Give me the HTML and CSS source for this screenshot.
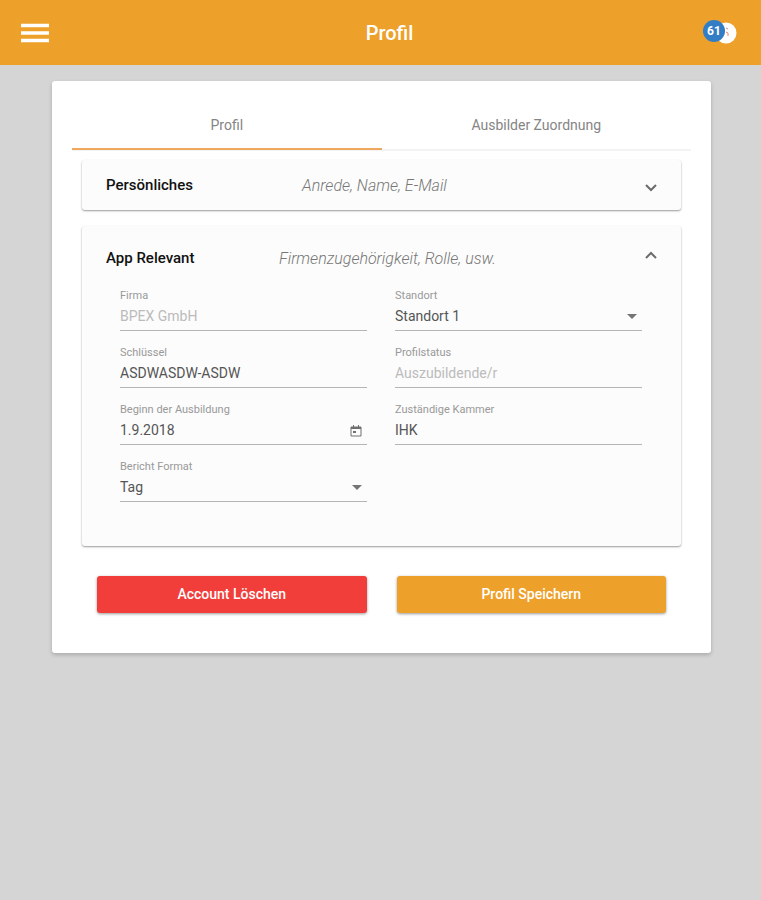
FILE: index.html
```html
<!DOCTYPE html>
<html lang="de">
<head>
    <meta charset="UTF-8">
    <meta name="viewport" content="width=device-width, initial-scale=1.0">
    <title>Profil</title>
    <link rel="stylesheet" href="styles.css">
</head>
<body>
    <header class="toolbar">
        <button type="button" class="menu-btn" aria-label="Menü">
            <svg width="30" height="20" viewBox="0 0 30 20">
                <path d="M1 2.5h28M1 10h28M1 17.5h28" fill="none" stroke="#fff" stroke-width="3.4"/>
            </svg>
        </button>
        <h1>Profil</h1>
        <button type="button" class="notify-btn" aria-label="Benachrichtigungen">
            <svg width="22" height="22" viewBox="0 0 22 22">
                <circle cx="11" cy="11" r="10.5" fill="#fff"/>
                <path d="M11 6l2 1M11 10l2 1v3" fill="none" stroke="#e58a6a" stroke-width="1"/>
            </svg>
            <span class="badge">61</span>
        </button>
    </header>

    <main class="card">
        <nav class="tabs">
            <button type="button" class="tab active">Profil</button>
            <button type="button" class="tab">Ausbilder Zuordnung</button>
        </nav>

        <form id="profileForm">
            <section class="panel">
                <button type="button" class="panel-header" aria-expanded="false">
                    <span class="panel-title">Persönliches</span>
                    <span class="panel-description">Anrede, Name, E-Mail</span>
                    <svg class="arrow" width="12" height="14" viewBox="0 0 12 14">
                        <path d="M1 7l5 5 5-5" fill="none" stroke="#6b6b6b" stroke-width="2"/>
                    </svg>
                </button>
            </section>

            <section class="panel">
                <button type="button" class="panel-header open" aria-expanded="true">
                    <span class="panel-title">App Relevant</span>
                    <span class="panel-description">Firmenzugehörigkeit, Rolle, usw.</span>
                    <svg class="arrow" width="12" height="14" viewBox="0 0 12 14">
                        <path d="M1 7l5-5 5 5" fill="none" stroke="#6b6b6b" stroke-width="2"/>
                    </svg>
                </button>
                <div class="fields">
                    <div class="field">
                        <label for="firma">Firma</label>
                        <input type="text" id="firma" value="BPEX GmbH" disabled>
                    </div>
                    <div class="field">
                        <label for="standort">Standort</label>
                        <div class="control">
                            <select id="standort">
                                <option>Standort 1</option>
                            </select>
                            <svg class="caret" width="10" height="5" viewBox="0 0 10 5">
                                <path d="M0 0h10L5 5z" fill="#757575"/>
                            </svg>
                        </div>
                    </div>
                    <div class="field">
                        <label for="schluessel">Schlüssel</label>
                        <input type="text" id="schluessel" value="ASDWASDW-ASDW">
                    </div>
                    <div class="field">
                        <label for="profilstatus">Profilstatus</label>
                        <input type="text" id="profilstatus" value="Auszubildende/r" disabled>
                    </div>
                    <div class="field">
                        <label for="beginn">Beginn der Ausbildung</label>
                        <div class="control">
                            <input type="text" id="beginn" value="1.9.2018">
                            <button type="button" class="date-btn" aria-label="Kalender öffnen">
                                <svg width="12" height="12" viewBox="0 0 12 12">
                                    <path d="M1 2h10v9H1z" fill="none" stroke="#707070" stroke-width="1"/>
                                    <path d="M1 2h10v2H1zM3 0h1v2H3zM8 0h1v2H8zM3 6h3v2H3z" fill="#707070"/>
                                </svg>
                            </button>
                        </div>
                    </div>
                    <div class="field">
                        <label for="kammer">Zuständige Kammer</label>
                        <input type="text" id="kammer" value="IHK">
                    </div>
                    <div class="field">
                        <label for="format">Bericht Format</label>
                        <div class="control">
                            <select id="format">
                                <option>Tag</option>
                            </select>
                            <svg class="caret" width="10" height="5" viewBox="0 0 10 5">
                                <path d="M0 0h10L5 5z" fill="#757575"/>
                            </svg>
                        </div>
                    </div>
                </div>
            </section>

            <div class="actions">
                <button type="button" class="btn btn-delete">Account Löschen</button>
                <button type="submit" class="btn btn-save">Profil Speichern</button>
            </div>
        </form>
    </main>
</body>
</html>
```
FILE: styles.css
```css
* {
    margin: 0;
    padding: 0;
    box-sizing: border-box;
}

body {
    font-family: Roboto, sans-serif;
    font-size: 14px;
    background-color: #d5d5d5;
    color: #555;
}

button, input, select {
    font-family: inherit;
    font-size: inherit;
    color: inherit;
    border: none;
    background: none;
}

button {
    cursor: pointer;
}

svg {
    display: block;
}

.toolbar {
    display: flex;
    align-items: center;
    gap: 14px;
    height: 65px;
    padding: 0 24px 0 20px;
    background-color: #eda12b;
}

.toolbar h1 {
    flex: 1;
    padding-left: 14px;
    color: #fff;
    font-size: 20px;
    font-weight: 500;
    text-align: center;
}

.notify-btn {
    position: relative;
}

.badge {
    position: absolute;
    top: -2px;
    right: 12px;
    width: 22px;
    height: 22px;
    border-radius: 50%;
    background-color: #337dc4;
    color: #fff;
    font-size: 12px;
    font-weight: bold;
    line-height: 22px;
    text-align: center;
}

.card {
    margin: 16px 50px 16px 52px;
    padding: 20px 20px 40px;
    background-color: #fff;
    border-radius: 3px;
    box-shadow: 0 2px 4px rgba(0, 0, 0, 0.2);
}

.tabs {
    display: flex;
    height: 50px;
    border-bottom: 2px solid #f3f3f3;
}

.tab {
    flex: 1;
    height: 49px;
    border-bottom: 2px solid transparent;
    color: #858585;
}

.tab.active {
    border-bottom-color: #efa75d;
}

form {
    padding: 9px 10px 0;
}

.panel {
    margin-bottom: 16px;
    background-color: #fcfcfc;
    border-radius: 3px;
    box-shadow: 0 1px 2px rgba(0, 0, 0, 0.4);
}

.panel-header {
    display: flex;
    align-items: center;
    width: 100%;
    height: 50px;
    padding: 0 24px;
    font-size: 15px;
    text-align: left;
}

.panel-header.open {
    height: 64px;
}

.panel-title {
    flex: 1 0 auto;
    margin-right: 16px;
    color: #111;
    font-weight: 500;
}

.panel-description {
    flex: 2 0 auto;
    margin-right: 12px;
    color: #777;
    font-size: 16px;
    font-style: italic;
    font-weight: 300;
}

.fields {
    display: grid;
    grid-template-columns: 1fr 1fr;
    column-gap: 28px;
    padding: 0 39px 28px 38px;
}

.field {
    height: 57px;
}

.field label {
    display: block;
    color: #999;
    font-size: 11px;
    line-height: 12px;
}

.field input, .field select {
    display: block;
    width: 100%;
    height: 29px;
    border-bottom: 1px solid #b5b5b5;
    appearance: none;
    border-radius: 0;
    outline: none;
}

.field input:disabled {
    color: #bbb;
}

.control {
    position: relative;
}

.caret {
    position: absolute;
    top: 12px;
    right: 5px;
    pointer-events: none;
}

.date-btn {
    position: absolute;
    top: 9px;
    right: 5px;
}

.actions {
    display: grid;
    grid-template-columns: 1fr 1fr;
    gap: 30px;
    padding: 14px 15px 0;
}

.btn {
    height: 37px;
    padding-bottom: 2px;
    border-radius: 3px;
    color: #fff;
    font-weight: 500;
    box-shadow: 0 1px 3px rgba(0, 0, 0, 0.4);
}

.btn-delete {
    background-color: #f23e3b;
}

.btn-save {
    background-color: #eda12b;
}
```
